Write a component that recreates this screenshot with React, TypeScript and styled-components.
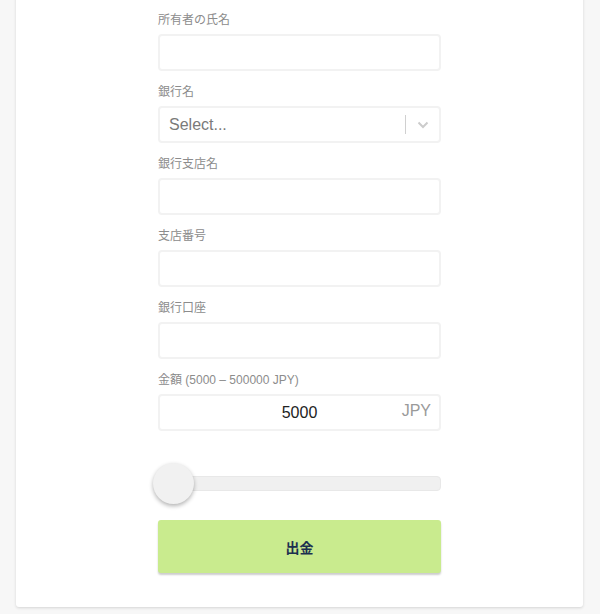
import React from "react";
import styled, { createGlobalStyle } from "styled-components";

const Global = createGlobalStyle`
  html, body { margin: 0; padding: 0; background: #f7f7f7; }
  body { font-family: "Liberation Sans", "Noto Sans CJK JP", Arial, sans-serif; }
  * { box-sizing: border-box; }
`;

const Page = styled.div`
  display: flow-root;
  padding-bottom: 7px;
`;

const Card = styled.div`
  margin: -20px 17px 0 16px;
  background: #fff;
  border-radius: 3px;
  box-shadow: 0 1px 3px rgba(0, 0, 0, 0.14);
  padding: 32px 0 34px;
  display: flex;
  justify-content: center;
`;

const Form = styled.div`
  width: 283px;
  display: flex;
  flex-direction: column;
`;

const Field = styled.div`
  display: flex;
  flex-direction: column;
  margin-bottom: 13px;
`;

const Label = styled.label`
  font-size: 12px;
  line-height: 16px;
  color: #8c8c8c;
  margin-bottom: 6px;
`;

const TextInput = styled.div`
  height: 37px;
  border: 2px solid #f2f2f2;
  border-radius: 4px;
  background: #fff;
`;

const SelectBox = styled.div`
  height: 37px;
  border: 2px solid #f2f2f2;
  border-radius: 4px;
  background: #fff;
  display: flex;
  align-items: center;
`;

const Placeholder = styled.span`
  flex: 1;
  padding-left: 9px;
  font-size: 16px;
  color: #7a7a7a;
`;

const Separator = styled.span`
  width: 1px;
  height: 19px;
  background: #d0d0d0;
`;

const Indicator = styled.span`
  width: 33px;
  display: flex;
  justify-content: center;
  align-items: center;
`;

const AmountBox = styled.div`
  position: relative;
  height: 37px;
  border: 2px solid #f2f2f2;
  border-radius: 4px;
  background: #fff;
  display: flex;
  align-items: center;
  justify-content: center;
`;

const AmountValue = styled.span`
  font-size: 16px;
  color: #222;
  padding-top: 1px;
`;

const Suffix = styled.span`
  position: absolute;
  right: 8px;
  top: 6px;
  font-size: 16px;
  color: #9a9a9a;
`;

const SliderWrap = styled.div`
  position: relative;
  height: 41px;
  margin-top: 19px;
  display: flex;
  align-items: center;
`;

const Track = styled.div`
  width: 100%;
  height: 15px;
  border-radius: 4px;
  background: #f0f0f0;
  border: 1px solid #e8e8e8;
`;

const Thumb = styled.div`
  position: absolute;
  top: 0;
  width: 41px;
  height: 41px;
  border-radius: 50%;
  background: #f1f1f1;
  box-shadow: 0 2px 4px rgba(0, 0, 0, 0.3);
`;

const SubmitButton = styled.button`
  margin-top: 16px;
  height: 53px;
  border: none;
  border-radius: 3px;
  background: #c9eb8e;
  color: #1c3050;
  font-family: "Liberation Sans", "Noto Sans CJK JP", sans-serif;
  font-weight: bold;
  font-size: 14px;
  box-shadow: 0 2px 2px rgba(0, 0, 0, 0.2);
  cursor: pointer;
`;

const fields = ["銀行支店名", "支店番号", "銀行口座"];

export default function App() {
  const min = 5000;
  const max = 500000;
  const value = 5000;
  const pct = (value - min) / (max - min);
  return (
    <Page>
      <Global />
      <Card>
        <Form>
          <Field>
            <Label>所有者の氏名</Label>
            <TextInput />
          </Field>
          <Field>
            <Label>銀行名</Label>
            <SelectBox>
              <Placeholder>Select...</Placeholder>
              <Separator />
              <Indicator>
                <svg width="12" height="8" viewBox="0 0 12 8">
                  <polyline points="1.5,1.5 6,6 10.5,1.5" fill="none" stroke="#cccccc" strokeWidth="2" />
                </svg>
              </Indicator>
            </SelectBox>
          </Field>
          {fields.map((f) => (
            <Field key={f}>
              <Label>{f}</Label>
              <TextInput />
            </Field>
          ))}
          <Field>
            <Label>金額 (5000 – 500000 JPY)</Label>
            <AmountBox>
              <AmountValue>5000</AmountValue>
              <Suffix>JPY</Suffix>
            </AmountBox>
          </Field>
          <SliderWrap>
            <Track />
            <Thumb style={{ left: `calc(${pct * 100}% - 5px)` }} />
          </SliderWrap>
          <SubmitButton>出金</SubmitButton>
        </Form>
      </Card>
    </Page>
  );
}
